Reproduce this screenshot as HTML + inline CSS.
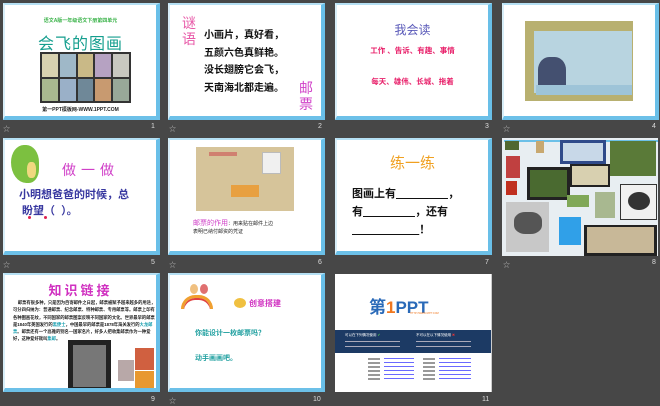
<!DOCTYPE html>
<html><head><meta charset="utf-8"><style>
*{margin:0;padding:0;box-sizing:border-box}
body{width:660px;height:406px;background:#474747;position:relative;overflow:hidden;font-family:"Liberation Sans","Noto Sans CJK SC",sans-serif}
.s{position:absolute;width:157px;height:117px;background:#fff;overflow:hidden}
.f{border-top:2px solid #b5e0f4;border-left:2px solid #d8eef8;border-right:4px solid #69bfe8;border-bottom:4px solid #6cc0e8}
.a{position:absolute}
.n{position:absolute;color:#ddd;font-size:7px}
.st{position:absolute;color:#bbb;font-size:7px}
</style></head><body>

<!-- slide 1 -->
<div class="s f" style="left:3px;top:3px">
<div class="a" style="left:0;width:151px;top:12px;text-align:center;font-size:5px;color:#3bb34a;font-weight:bold">语文A版一年级语文下册第四单元</div>
<div class="a" style="left:0;width:151px;top:25px;text-align:center;font-size:16px;color:#149e8e;letter-spacing:1px">会飞的图画</div>
<div class="a" style="left:35px;top:47px;width:91px;height:51px;background:#333;padding:2px">
<div style="display:grid;grid-template-columns:repeat(5,1fr);gap:2px;height:100%">
<div style="background:#d8d2b0"></div><div style="background:#9fb8c8"></div><div style="background:#c9b987"></div><div style="background:#b6a2c2"></div><div style="background:#c8c8c0"></div>
<div style="background:#a8b890"></div><div style="background:#9ab0c8"></div><div style="background:#6f8898"></div><div style="background:#c89a70"></div><div style="background:#98a898"></div>
</div></div>
<div class="a" style="left:0;width:151px;top:101px;text-align:center;font-size:5px;color:#222;font-weight:bold">第一PPT模板网-WWW.1PPT.COM</div>
</div>
<div class="st" style="left:3px;top:124px">☆</div><div class="n" style="left:151px;top:123px">1</div>

<!-- slide 2 -->
<div class="s f" style="left:168px;top:3px">
<div class="a" style="left:12px;top:10px;font-size:14px;line-height:16px;color:#e85aa8;width:16px">谜语</div>
<div class="a" style="left:34px;top:22px;font-size:10px;line-height:17.5px;color:#111;font-weight:bold;white-space:nowrap">小画片，真好看，<br>五颜六色真鲜艳。<br>没长翅膀它会飞，<br>天南海北都走遍。</div>
<div class="a" style="left:129px;top:75px;font-size:14px;line-height:16px;color:#d040c8;width:16px">邮票</div>
</div>
<div class="st" style="left:169px;top:124px">☆</div><div class="n" style="left:318px;top:123px">2</div>

<!-- slide 3 -->
<div class="s f" style="left:335px;top:3px">
<div class="a" style="left:0;width:151px;top:16px;text-align:center;font-size:12px;color:#5858b8">我会读</div>
<div class="a" style="left:0;width:151px;top:40px;text-align:center;font-size:7.5px;color:#e8206a;font-weight:bold">工作 、告诉、有趣、事情</div>
<div class="a" style="left:0;width:151px;top:71px;text-align:center;font-size:7.5px;color:#e8206a;font-weight:bold">每天、雄伟、长城、拖着</div>
</div>
<div class="n" style="left:485px;top:123px">3</div>

<!-- slide 4 -->
<div class="s f" style="left:502px;top:3px">
<div class="a" style="left:21px;top:16px;width:108px;height:80px;background:#b8b070"></div>
<div class="a" style="left:30px;top:26px;width:98px;height:62px;background:#b8d4e0"></div>
<div class="a" style="left:34px;top:52px;width:28px;height:32px;background:#445070;border-radius:40% 40% 10% 10%"></div>
<div class="a" style="left:32px;top:80px;width:96px;height:10px;background:#9ec4d8"></div>
</div>
<div class="st" style="left:503px;top:124px">☆</div><div class="n" style="left:652px;top:123px">4</div>

<!-- slide 5 -->
<div class="s f" style="left:3px;top:138px">
<div class="a" style="left:6px;top:5px;width:28px;height:38px;background:#7cc040;border-radius:50% 50% 40% 60%"></div>
<div class="a" style="left:22px;top:22px;width:9px;height:16px;background:#f0d880;border-radius:40%"></div>
<div class="a" style="left:57px;top:20px;font-size:14px;color:#d040c8;letter-spacing:5px">做一做</div>
<div class="a" style="left:14px;top:47px;width:140px;font-size:11px;line-height:16px;color:#3838a0;font-weight:bold">小明想爸爸的时候，总<br>&nbsp;盼望（&nbsp;&nbsp;）。</div>
<div class="a" style="left:23px;top:76px;width:3px;height:3px;background:#e02050;border-radius:50%"></div>
<div class="a" style="left:39px;top:76px;width:3px;height:3px;background:#e02050;border-radius:50%"></div>
</div>
<div class="st" style="left:3px;top:260px">☆</div><div class="n" style="left:151px;top:259px">5</div>

<!-- slide 6 -->
<div class="s f" style="left:168px;top:138px">
<div class="a" style="left:26px;top:7px;width:98px;height:64px;background:#d6c49a"></div>
<div class="a" style="left:39px;top:12px;width:28px;height:4px;background:#d08070"></div>
<div class="a" style="left:92px;top:12px;width:19px;height:22px;background:#f0f0f0;border:1px solid #bbb"></div>
<div class="a" style="left:61px;top:45px;width:28px;height:12px;background:#e8a040"></div>
<div class="a" style="left:23px;top:78px;font-size:7px;color:#d040c8;white-space:nowrap">邮票的作用<span style="color:#222;font-size:5px">：用来贴在邮件上边</span></div>
<div class="a" style="left:23px;top:88px;font-size:5px;color:#222;white-space:nowrap">表明已纳付邮资的凭证</div>
</div>
<div class="st" style="left:169px;top:260px">☆</div><div class="n" style="left:318px;top:259px">6</div>

<!-- slide 7 -->
<div class="s f" style="left:335px;top:138px">
<div class="a" style="left:0;width:151px;top:12px;text-align:center;font-size:15px;color:#f0a020">练一练</div>
<div class="a" style="left:15px;top:45px;font-size:11px;line-height:18px;color:#111;font-weight:bold;white-space:nowrap">图画上有<span style="text-decoration:underline">&nbsp;&nbsp;&nbsp;&nbsp;&nbsp;&nbsp;&nbsp;&nbsp;&nbsp;&nbsp;&nbsp;&nbsp;&nbsp;&nbsp;&nbsp;&nbsp;&nbsp;</span>，<br>有<span style="text-decoration:underline">&nbsp;&nbsp;&nbsp;&nbsp;&nbsp;&nbsp;&nbsp;&nbsp;&nbsp;&nbsp;&nbsp;&nbsp;&nbsp;&nbsp;&nbsp;&nbsp;&nbsp;</span>，还有<br><span style="text-decoration:underline">&nbsp;&nbsp;&nbsp;&nbsp;&nbsp;&nbsp;&nbsp;&nbsp;&nbsp;&nbsp;&nbsp;&nbsp;&nbsp;&nbsp;&nbsp;&nbsp;&nbsp;&nbsp;&nbsp;&nbsp;&nbsp;&nbsp;</span>！</div>
</div>
<div class="n" style="left:485px;top:259px">7</div>

<!-- slide 8 -->
<div class="s" style="left:502px;top:138px;width:156px;height:118px;background:#e8eef2">
<div class="a" style="left:2px;top:2px;width:154px;height:2px;background:#6cc0e8"></div>
<div class="a" style="left:3px;top:3px;width:14px;height:9px;background:#506830"></div>
<div class="a" style="left:34px;top:3px;width:8px;height:12px;background:#c8a870"></div>
<div class="a" style="left:58px;top:2px;width:46px;height:24px;background:#2f4a8a"></div>
<div class="a" style="left:61px;top:5px;width:40px;height:18px;background:#c8d8e8"></div>
<div class="a" style="left:108px;top:3px;width:46px;height:35px;background:#5a7a38"></div>
<div class="a" style="left:4px;top:18px;width:14px;height:22px;background:#c04040"></div>
<div class="a" style="left:4px;top:43px;width:11px;height:14px;background:#c03020"></div>
<div class="a" style="left:25px;top:29px;width:43px;height:33px;background:#222"></div>
<div class="a" style="left:28px;top:32px;width:37px;height:27px;background:#4a6a30"></div>
<div class="a" style="left:68px;top:26px;width:40px;height:23px;background:#222"></div>
<div class="a" style="left:70px;top:28px;width:36px;height:19px;background:#d8d0b0"></div>
<div class="a" style="left:4px;top:64px;width:43px;height:50px;background:#c8c8c8"></div>
<div class="a" style="left:12px;top:74px;width:28px;height:22px;background:#555;border-radius:40%"></div>
<div class="a" style="left:65px;top:57px;width:22px;height:12px;background:#80a858"></div>
<div class="a" style="left:93px;top:54px;width:20px;height:26px;background:#a8b890"></div>
<div class="a" style="left:118px;top:46px;width:37px;height:36px;background:#f0f0f0;border:1px solid #333"></div>
<div class="a" style="left:126px;top:54px;width:22px;height:18px;background:#333;border-radius:50%"></div>
<div class="a" style="left:57px;top:79px;width:22px;height:28px;background:#30a0e8"></div>
<div class="a" style="left:82px;top:87px;width:73px;height:31px;background:#222"></div>
<div class="a" style="left:85px;top:89px;width:67px;height:26px;background:#c8b898"></div>
</div>
<div class="st" style="left:503px;top:260px">☆</div><div class="n" style="left:652px;top:259px">8</div>

<!-- slide 9 -->
<div class="s f" style="left:3px;top:273px;height:119px">
<div class="a" style="left:0;width:151px;top:5px;text-align:center;font-size:13px;color:#d030c0;letter-spacing:3px;font-weight:bold">知识链接</div>
<div class="a" style="left:8px;top:24px;width:145px;font-size:4.3px;line-height:7.3px;color:#222;font-weight:bold">&nbsp;&nbsp;&nbsp;&nbsp;邮票有很多种，只是因为自寄邮件之日起，邮票被赋予越来越多的用途，可分四归纳为：普通邮票、纪念邮票、特种邮票、专用邮票等。邮票上印有各种图画花纹，不同国家的邮票图案反映不同国家的文化。世界最早的邮票是1840年英国发行的<span style="color:#1aa0b0">黑便士</span>，中国最早的邮票是1878年海关发行的<span style="color:#1aa0b0">大龙邮票</span>。邮票还有一个高雅的别名—国家名片，好多人把收集邮票作为一种爱好，这种爱好就叫<span style="color:#1aa0b0">集邮</span>。</div>
<div class="a" style="left:63px;top:65px;width:43px;height:52px;background:#222"></div>
<div class="a" style="left:68px;top:70px;width:33px;height:42px;background:#777"></div>
<div class="a" style="left:113px;top:85px;width:16px;height:21px;background:#b8a8a8"></div>
<div class="a" style="left:130px;top:73px;width:19px;height:22px;background:#d06040"></div>
<div class="a" style="left:130px;top:96px;width:19px;height:21px;background:#e89830"></div>
</div>
<div class="n" style="left:151px;top:396px">9</div>

<!-- slide 10 -->
<div class="s f" style="left:168px;top:273px;height:119px">
<div class="a" style="left:11px;top:20px;width:32px;height:14px;border-radius:16px 16px 0 0;border:3px solid #f0a030;border-bottom:none;box-shadow:inset 0 2px 0 #e04040"></div>
<div class="a" style="left:20px;top:9px;width:8px;height:10px;background:#f0c080;border-radius:50%"></div>
<div class="a" style="left:30px;top:9px;width:8px;height:10px;background:#e07070;border-radius:50%"></div>
<div class="a" style="left:64px;top:23px;width:12px;height:10px;background:#f0c040;border-radius:50%"></div>
<div class="a" style="left:79px;top:23px;font-size:8px;color:#d030c0;font-weight:bold">创意搭建</div>
<div class="a" style="left:25px;top:53px;font-size:7px;color:#20a0a0;font-weight:bold">你能设计一枚邮票吗？</div>
<div class="a" style="left:25px;top:78px;font-size:7px;color:#20a0a0;font-weight:bold">动手画画吧。</div>
</div>
<div class="st" style="left:169px;top:396px">☆</div><div class="n" style="left:313px;top:396px">10</div>

<!-- slide 11 -->
<div class="s" style="left:335px;top:274px;width:157px;height:118px;border-right:1px solid #ccc">
<div class="a" style="left:34px;top:19px;font-size:17px;color:#2a6ab8;font-weight:bold;white-space:nowrap">第<span style="color:#f07820">1</span>PPT</div>
<div class="a" style="left:75px;top:38px;font-size:2.5px;color:#f07820">HTTP://WWW.1PPT.COM</div>
<div class="a" style="left:0;top:56px;width:157px;height:23px;background:#1c3a64"></div>
<div class="a" style="left:10px;top:59px;font-size:3.5px;color:#fff">可以在下列情况使用 <span style="color:#5c5">✔</span></div>
<div class="a" style="left:81px;top:59px;font-size:3.5px;color:#fff">不可以在以下情况使用 <span style="color:#e33">✖</span></div>
<div class="a" style="left:10px;top:67px;width:55px;height:1px;background:#aab"></div>
<div class="a" style="left:10px;top:72px;width:55px;height:1px;background:#aab"></div>
<div class="a" style="left:81px;top:67px;width:55px;height:1px;background:#aab"></div>
<div class="a" style="left:81px;top:72px;width:55px;height:1px;background:#aab"></div>
<div class="a" style="left:33px;top:84px;width:12px;height:24px;background:repeating-linear-gradient(#999 0 2px,#fff 2px 4px)"></div>
<div class="a" style="left:49px;top:84px;width:30px;height:24px;background:repeating-linear-gradient(#6a6aff 0 1px,#fff 1px 4px)"></div>
<div class="a" style="left:88px;top:84px;width:12px;height:24px;background:repeating-linear-gradient(#999 0 2px,#fff 2px 4px)"></div>
<div class="a" style="left:104px;top:84px;width:32px;height:24px;background:repeating-linear-gradient(#6a6aff 0 1px,#fff 1px 4px)"></div>
</div>
<div class="n" style="left:482px;top:396px">11</div>

</body></html>
